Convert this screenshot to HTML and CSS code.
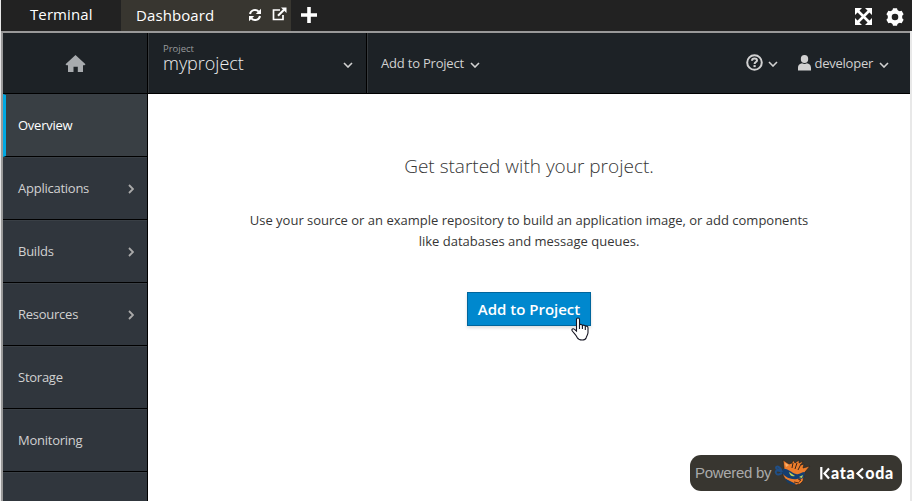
FILE: index.html
```html
<!DOCTYPE html>
<html lang="en">
<head>
<meta charset="utf-8">
<title>Dashboard</title>
<link rel="stylesheet" href="styles.css">
</head>
<body>
<div class="window">
  <div class="tabs">
    <div class="tab">Terminal</div>
    <div class="tab tab-active">
      <span class="tab-label">Dashboard</span>
      <svg class="refresh" viewBox="0 0 14 14" width="14" height="14"><path d="M2 6a5 5 0 0 1 8.700-2.300M12 8a5 5 0 0 1-8.700 2.300" fill="none" stroke="#fff" stroke-width="2"/><path d="M13 .8V6H7.800zM1 13.200V8h5.200z" fill="#fff"/></svg>
      <svg class="external" viewBox="0 0 15 14" width="15" height="14"><path d="M8 3H1.500v9.500H11V8" fill="none" stroke="#fff" stroke-width="1.700"/><path d="M6 8.700L12 2.700" stroke="#fff" stroke-width="2.200"/><path d="M9 .5h5.500V6z" fill="#fff"/></svg>
    </div>
    <svg class="plus" viewBox="0 0 16 16" width="16" height="16"><path d="M8 0v16M0 8h16" stroke="#fff" stroke-width="3.600"/></svg>
    <div class="tools">
      <svg viewBox="0 0 17 17" width="17" height="17"><path d="M3 3l11 11M14 3L3 14" stroke="#fff" stroke-width="2.600"/><path d="M0 0h7L0 7zM17 0v7L10 0zM0 17v-7l7 7zM17 17h-7l7-7z" fill="#fff"/></svg>
      <svg viewBox="-9 -9 18 18" width="18" height="18"><g fill="#fff"><circle r="5.300" fill="none" stroke="#fff" stroke-width="4"/><g id="teeth"><path d="M-2.800-6L-2-8.800h4L2.800-6zM-2.800 6l.8 2.800h4l.8-2.800z"/></g><use href="#teeth" transform="rotate(60)"/><use href="#teeth" transform="rotate(120)"/></g></svg>
    </div>
  </div>
  <div class="frame">
    <header class="header">
      <div class="home"><svg viewBox="0 0 21 18" width="21" height="18"><path d="M10.500 0l10 9.300-1 1-1.500-.1V17h-5.200v-5.300H8.500V17H3v-6.800l-1.500.1-1-1z" fill="#a8abae"/></svg></div>
      <div class="project">
        <div class="project-text"><small>Project</small><span>myproject</span></div>
        <svg class="chev" viewBox="0 0 10 6" width="10" height="6"><path d="M1 1l4 4 4-4"/></svg>
      </div>
      <div class="add-menu"><span>Add to Project</span><svg class="chev" viewBox="0 0 10 6" width="10" height="6"><path d="M1 1l4 4 4-4"/></svg></div>
      <div class="help">
        <svg viewBox="0 0 17 17" width="17" height="17"><circle cx="8.500" cy="8.500" r="7.300" fill="none" stroke="#d1d1d1" stroke-width="2"/><path d="M6 6.700C6.100 3.700 11 3.800 11 6.400 11 8.100 8.600 8 8.600 10" fill="none" stroke="#d1d1d1" stroke-width="2"/><path d="M7.500 11.100h2.200v2H7.500z" fill="#d1d1d1"/></svg>
        <svg class="chev" viewBox="0 0 10 6" width="10" height="6"><path d="M1 1l4 4 4-4"/></svg>
      </div>
      <div class="user">
        <svg viewBox="0 0 13 16" width="13" height="16"><ellipse cx="6.500" cy="4" rx="3.700" ry="4" fill="#d1d1d1"/><path d="M0 15.500v-2.800C0 9.500 2.300 8.500 4 8.200q2.500 1.500 5 0c1.700.3 4 1.300 4 4.500v2.800z" fill="#d1d1d1"/></svg>
        <span>developer</span>
        <svg class="chev" viewBox="0 0 10 6" width="10" height="6"><path d="M1 1l4 4 4-4"/></svg>
      </div>
    </header>
    <div class="body">
      <nav class="sidebar">
        <a class="item item-active"><span>Overview</span></a>
        <a class="item"><span>Applications</span><svg class="arrow" viewBox="0 0 6 10" width="6" height="10"><path d="M1 1l4 4-4 4"/></svg></a>
        <a class="item"><span>Builds</span><svg class="arrow" viewBox="0 0 6 10" width="6" height="10"><path d="M1 1l4 4-4 4"/></svg></a>
        <a class="item"><span>Resources</span><svg class="arrow" viewBox="0 0 6 10" width="6" height="10"><path d="M1 1l4 4-4 4"/></svg></a>
        <a class="item"><span>Storage</span></a>
        <a class="item"><span>Monitoring</span></a>
        <a class="item"></a>
      </nav>
      <main class="main">
        <h1>Get started with your project.</h1>
        <p><span>Use your source or an example repository to build an application image, or add components</span><br><span>like databases and message queues.</span></p>
        <button class="primary">Add to Project</button>
      </main>
    </div>
  </div>
</div>
<svg class="cursor" viewBox="0 0 19 24" width="19" height="24"><path d="M5.500 14V2.500c0-2 3-2 3 0V8c.7-1 2.700-.7 2.900.6.9-.8 2.700-.5 2.900.8 1-.7 2.700 0 2.700 1.600v4.500c0 2.200-1.500 3.500-1.800 5.200-.6 1.600-2 2.300-4 2.300-2.700 0-4.200-.7-5-2.500C5.400 18.300 3.200 16.500 1.300 14c-1.300-1.700.8-2.900 2.200-1.700z" fill="#fff" stroke="#151522" stroke-width="1.100"/><path d="M8.500 8v4M11.400 8.800V12M14.300 9.800V13" stroke="#151522" stroke-width="1.100"/></svg>
<div class="powered">
  <span class="powered-text">Powered by</span>
  <svg class="cat" viewBox="0 0 38 28" width="38" height="28">
    <path d="M9 1l6 4 3-1 1-3 2 3 4-3 0 3 4-2-2 4 3-1-1 4 7-2-5 6-1 4-1 5-3 3-4 1-5-2-6-4-2-4 1-7z" fill="#ee7d2b" stroke="#272421" stroke-width=".7"/>
    <path d="M11 4l1 4 3-2z" fill="#f8b06e"/>
    <path d="M19 4l-1 5M23 4l-2 6M27 5l-3 6" fill="none" stroke="#38251c"/>
    <path d="M9 10c5-1 8 4 13 5 4 1 5-2 9-2l-1 5c-2 3-5 1-7 2-5 1-11-1-15-6z" fill="#153e70"/>
    <path d="M8 13C7 8 2 6 2 9c0 2 4 1 4 3-3-1-5 0-4 2 1 3 4 1 6 0" fill="none" stroke="#204e85" stroke-width="2"/>
    <path d="M15 13l6 4c-3 1-5 0-6-4zM25 18l4-2-1 3z" fill="#bfd35d"/>
    <path d="M10 19l6 3 6 3-2 1-6-2z" fill="#173c63"/>
    <path d="M24 20l3 1-2 1.500M20 23l5 1" fill="none" stroke="#55301b"/>
  </svg>
  <div class="brand"><svg viewBox="0 0 10 13" width="10" height="13"><path d="M1.300 0v12.500M9 1.500L4.500 6.500l4.500 5" fill="none" stroke="#fff" stroke-width="2.200"/></svg><span>ata</span><svg viewBox="0 0 9 13" width="9" height="13"><path d="M8 1.500L2.500 6.500l5.500 5" fill="none" stroke="#fff" stroke-width="2.200"/></svg><span>oda</span></div>
</div>
</body>
</html>
```
FILE: styles.css
```css
* { box-sizing: border-box; }
body { margin: 0; width: 912px; height: 501px; overflow: hidden; background: #e8e8e8; font-family: "Open Sans", sans-serif; font-size: 13px; }
svg { display: block; flex: none; }
span, small { white-space: nowrap; }
.window { height: 501px; padding-left: 1px; display: flex; flex-direction: column; }
.tabs { height: 31px; flex: none; display: flex; background: #222; color: #fff; font-size: 15px; line-height: 29px; }
.tab { width: 120px; padding-left: 29px; letter-spacing: .1px; }
.tab-active { width: 170px; background: #383630; display: flex; padding-left: 15px; line-height: 31px; }
.tab-label { width: 112px; }
.refresh { margin-top: 8px; }
.external { margin: 7px 0 0 10px; }
.plus { margin: 7px 0 0 10px; }
.tools { margin: 8px 8px 0 auto; display: flex; gap: 14px; }
.frame { flex: 1; min-height: 0; margin-right: 2px; border-top: 2px solid #999; border-left: 2px solid #999; display: flex; flex-direction: column; }
.header { height: 61px; flex: none; display: flex; align-items: center; background: #1d2226; border-bottom: 1px solid #000; color: #d1d1d1; }
.home { width: 145px; height: 60px; display: flex; justify-content: center; padding-top: 22px; border-right: 1px solid #000; }
.project { width: 219px; height: 60px; display: flex; justify-content: space-between; padding: 0 13px 0 14px; border-left: 1px solid #363a3d; border-right: 1px solid #000; }
.project-text { display: flex; flex-direction: column; padding-top: 10px; }
.project small { font-size: 9.500px; line-height: 12px; color: #999b9d; }
.project-text span { font-size: 18px; line-height: 17px; letter-spacing: -.02px; color: #eee; font-weight: 300; }
.chev { fill: none; stroke: #d1d1d1; stroke-width: 1.600; }
.project .chev { margin-top: 29px; }
.add-menu { height: 60px; flex: 1; display: flex; align-items: center; gap: 6px; padding-left: 13px; border-left: 1px solid #363a3d; }
.add-menu span { letter-spacing: -.2px; }
.add-menu .chev, .help .chev, .user .chev { margin-top: 3px; }
.help { display: flex; align-items: center; gap: 5px; margin-top: -2px; }
.user { display: flex; align-items: center; margin: 0 21px 0 20px; }
.user span { margin: 0 6px 0 4px; letter-spacing: -.25px; }
.body { flex: 1; min-height: 0; display: flex; }
.sidebar { width: 145px; background: #30363d; border-right: 1px solid #000; overflow: hidden; }
.item { height: 63px; display: flex; align-items: center; justify-content: space-between; padding: 0 13px 0 15px; border-top: 1px solid #393f45; border-bottom: 1px solid #000; color: #d1d1d1; letter-spacing: -.25px; }
.item span { padding-bottom: 2px; }
.item-active { background: #393f44; border-left: 3px solid #00a8e1; padding-left: 12px; color: #fff; }
.arrow { fill: none; stroke: #aaa; stroke-width: 1.800; }
.main { flex: 1; background: #fff; display: flex; flex-direction: column; align-items: center; color: #363636; }
h1 { margin: 58px 0 0; font-size: 19px; line-height: 28px; font-weight: 300; }
p { margin: 30px 0 0; text-align: center; line-height: 21px; }
.primary { margin-top: 40px; width: 124px; height: 34px; padding: 0; background: #0088ce; border: 1px solid #00659c; box-shadow: 0 2px 3px #0002; color: #fff; font: 600 15px "Open Sans", sans-serif; }
.cursor { position: absolute; left: 571px; top: 317px; }
.powered { position: absolute; left: 690px; top: 455px; width: 212px; height: 36px; border-radius: 11px; background: #383630; display: flex; align-items: center; padding-left: 5px; }
.powered-text { width: 77px; font: 15px "Liberation Sans", sans-serif; letter-spacing: -.3px; color: #aaa; padding-bottom: 2px; }
.cat { margin: -1px 0 0 2px; }
.brand { margin-left: 8px; display: flex; align-items: center; color: #fff; font: 900 16px/18px Lato, sans-serif; letter-spacing: .65px; }
.brand span { padding: 0 0 1px 1px; }
```
